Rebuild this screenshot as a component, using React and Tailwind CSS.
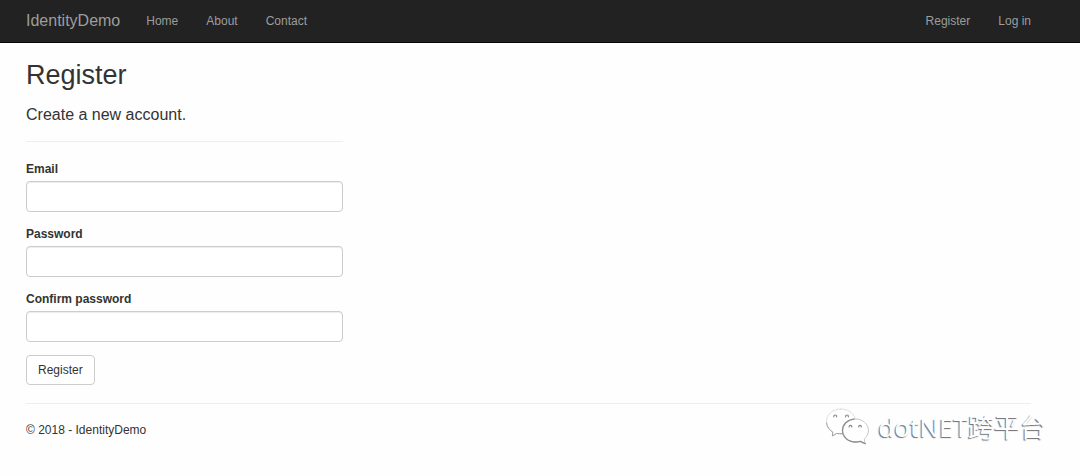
const navLinkClassName = "px-[14px] text-[#9d9d9d] hover:text-white";
const inputLabelClassName = "mb-[3px] block leading-[18px] font-bold";
const inputClassName =
  "h-[31px] w-full rounded border border-[#ccc] bg-white px-[11px] text-[#555] shadow-[inset_0_1px_1px_rgba(0,0,0,0.075)] outline-none focus:border-[#66afe9]";

const formFields = [
  { id: "email", label: "Email", type: "email" },
  { id: "password", label: "Password", type: "password" },
  { id: "confirmPassword", label: "Confirm password", type: "password" },
];

const Navbar = () => {
  return (
    <nav className="border-b border-[#080808] bg-[#222]">
      <div className="flex h-[42px] items-center pr-[35px] pl-[26px]">
        <a href="#" className="mr-3 text-base text-[#9d9d9d] hover:text-white">
          IdentityDemo
        </a>
        <a href="#home" className={navLinkClassName}>Home</a>
        <a href="#about" className={navLinkClassName}>About</a>
        <a href="#contact" className={navLinkClassName}>Contact</a>
        <div className="ml-auto flex">
          <a href="#register" className={navLinkClassName}>Register</a>
          <a href="#login" className={navLinkClassName}>Log in</a>
        </div>
      </div>
    </nav>
  );
};

const RegisterForm = () => {
  return (
    <form autoComplete="off" onSubmit={(e) => e.preventDefault()}>
      <h4 className="text-base leading-5">Create a new account.</h4>
      <hr className="mt-4 mb-[18px] border-[#eee]" />
      {formFields.map((field) => (
        <div key={field.id} className="mb-[13px]">
          <label htmlFor={field.id} className={inputLabelClassName}>
            {field.label}
          </label>
          <input id={field.id} type={field.type} className={inputClassName} />
        </div>
      ))}
      <button
        type="submit"
        className="block h-[30px] rounded border border-[#ccc] bg-white px-[11px] hover:bg-[#e6e6e6]"
      >
        Register
      </button>
    </form>
  );
};

const ChatIcon = () => {
  return (
    <svg
      width="46"
      height="40"
      viewBox="0 0 46 40"
      fill="#fff"
      strokeLinecap="round"
      strokeLinejoin="round"
      aria-hidden="true"
    >
      <path
        stroke="#dedee2"
        d="M17 2C8.700 2 2.500 7.500 2.500 14.500c0 4.600 2.400 8.300 6.300 10.600L8.500 29l4.300-2.600c1.300.3 2.700.5 4.200.5h2C27 26 31.500 21 31.500 14.500 31.500 7.500 25.300 2 17 2Z"
      />
      <path
        fill="none"
        stroke="#a2a2a7"
        d="M2.600 16c.5 4 2.700 7 6.200 9.100L8.300 29l4.500-2.600c1.700.4 3.800.4 5.500.3"
      />
      <path
        stroke="#c8c8cd"
        d="M44.500 23.500C44.500 17 38.700 12 31.500 12S18.500 17 18.500 23.500 24.300 35 31.500 35c1.700 0 3.300-.2 4.700-.7l5 2.400-1-4.600c2.700-2.100 4.300-5.200 4.300-8.600Z"
      />
      <path
        fill="none"
        stroke="#8c8c92"
        strokeWidth="1.300"
        d="M30 12.100c-6.500.6-11.500 5.400-11.500 11.400C18.500 30 24.300 35 31.500 35c1.700 0 3.300-.2 4.700-.7l5 2.400"
      />
      <g fill="none" stroke="#8b8b90" strokeWidth="1.200">
        <path d="M9.800 9.800c-.3-2.400 3-2.400 2.800 0" />
        <path d="M21.600 9.800c-.3-2.400 3-2.400 2.800 0" />
        <path d="M25.200 20c-.3-2.200 2.800-2.200 2.600 0" />
        <path d="M34.700 20c-.3-2.200 2.800-2.200 2.600 0" />
      </g>
    </svg>
  );
};

const Watermark = () => {
  return (
    <div className="pointer-events-none absolute top-[22px] right-[34px] flex items-center gap-2">
      <ChatIcon />
      <span className="font-['Noto_Sans','Noto_Sans_CJK_SC',sans-serif] text-[26px] leading-10 text-white [text-shadow:-1px_1px_1px_rgba(60,60,64,0.75)]">
        dotNET跨平台
      </span>
    </div>
  );
};

const App = () => {
  return (
    <div className="min-h-screen bg-[#fefefe] font-['Liberation_Sans',Arial,sans-serif] text-xs text-[#333]">
      <Navbar />
      <main className="pt-[18px] pr-[49px] pl-[26px]">
        <h2 className="mb-4 text-[27px] leading-7">Register</h2>
        <div className="grid grid-cols-3 gap-[27px]">
          <RegisterForm />
        </div>
      </main>
      <footer className="relative pt-[18px] pr-[49px] pl-[26px]">
        <hr className="mb-[17px] border-[#eee]" />
        <p className="leading-[18px]">&copy; 2018 - IdentityDemo</p>
        <Watermark />
      </footer>
    </div>
  );
};

export default App;
